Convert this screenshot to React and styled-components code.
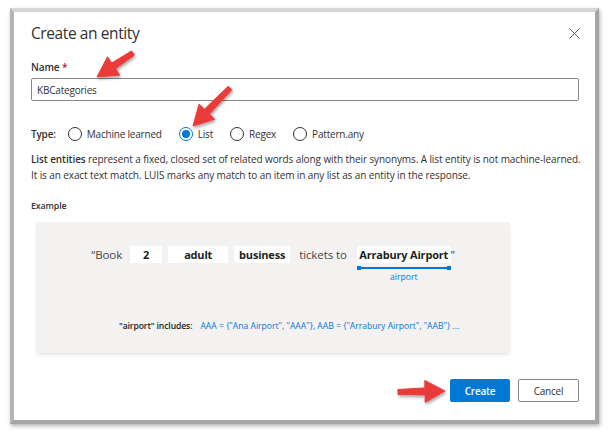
import React from "react";
import styled, { createGlobalStyle } from "styled-components";

const GlobalStyle = createGlobalStyle`
  html, body {
    margin: 0;
    padding: 0;
    background: #fff;
  }
  body {
    font-family: "Open Sans", "Noto Sans", sans-serif;
    color: #323130;
  }
`;

const arrows = [
  { from: [133, 53], to: [97, 77] },
  { from: [230, 88], to: [193, 126] },
  { from: [398, 392], to: [445, 391] },
];

function arrowPoints([x1, y1], [x2, y2]) {
  const dx = x2 - x1;
  const dy = y2 - y1;
  const len = Math.hypot(dx, dy);
  const ux = dx / len;
  const uy = dy / len;
  const nx = -uy;
  const ny = ux;
  const head = 20;
  const headW = 11;
  const tailW = 2.5;
  const neckW = 3.5;
  const bx = x2 - ux * head;
  const by = y2 - uy * head;
  const p = (x, y) => `${x.toFixed(1)},${y.toFixed(1)}`;
  return [
    p(x1 + nx * tailW, y1 + ny * tailW),
    p(bx + nx * neckW, by + ny * neckW),
    p(bx + nx * headW, by + ny * headW),
    p(x2, y2),
    p(bx - nx * headW, by - ny * headW),
    p(bx - nx * neckW, by - ny * neckW),
    p(x1 - nx * tailW, y1 - ny * tailW),
  ].join(" ");
}

function App() {
  return (
    <Page>
      <GlobalStyle />
      <Dialog>
        <Header>
          <Title>Create an entity</Title>
          <CloseBtn aria-label="Close">
            <svg width="11" height="11" viewBox="0 0 11 11">
              <path d="M0.5 0.5 L10.5 10.5 M10.5 0.5 L0.5 10.5" stroke="#605e5c" strokeWidth="1" />
            </svg>
          </CloseBtn>
        </Header>

        <Label>
          Name <Required>*</Required>
        </Label>
        <TextInput defaultValue="KBCategories" />

        <TypeRow>
          <TypeLabel>Type:</TypeLabel>
          <Radio label="Machine learned" />
          <Radio label="List" checked />
          <Radio label="Regex" />
          <Radio label="Pattern.any" />
        </TypeRow>

        <Description>
          <b>List entities</b> represent a fixed, closed set of related words along with their
          synonyms. A list entity is not machine-learned.
          <br />
          It is an exact text match. LUIS marks any match to an item in any list as an entity in
          the response.
        </Description>

        <SectionLabel>Example</SectionLabel>
        <ExampleCard>
          <Sentence>
            <Plain>“Book</Plain>
            <Token $w={32}>2</Token>
            <Token $w={60}>adult</Token>
            <Token $w={56}>business</Token>
            <Plain $pad>tickets to</Plain>
            <Tagged>
              <Token $w={94}>Arrabury Airport</Token>
              <TagLine />
              <TagName>airport</TagName>
            </Tagged>
            <Plain $tight>”</Plain>
          </Sentence>
          <Includes>
            <IncludesLabel>"airport" includes:</IncludesLabel>
            <IncludesValue>
              AAA = {"{"}"Ana Airport", "AAA"{"}"}, AAB = {"{"}"Arrabury Airport", "AAB"{"}"} ...
            </IncludesValue>
          </Includes>
        </ExampleCard>

        <Footer>
          <PrimaryButton>Create</PrimaryButton>
          <DefaultButton>Cancel</DefaultButton>
        </Footer>
      </Dialog>

      <Overlay width="611" height="431" viewBox="0 0 611 431">
        <defs>
          <filter id="arrowShadow" x="-20%" y="-20%" width="140%" height="140%">
            <feDropShadow dx="1" dy="2" stdDeviation="1.5" floodColor="#000" floodOpacity="0.35" />
          </filter>
        </defs>
        {arrows.map((a, i) => (
          <polygon
            key={i}
            points={arrowPoints(a.from, a.to)}
            fill="#ea3b3b"
            stroke="#ea3b3b"
            strokeWidth="1"
            strokeLinejoin="round"
            filter="url(#arrowShadow)"
          />
        ))}
      </Overlay>
    </Page>
  );
}

function Radio({ label, checked }) {
  return (
    <RadioOption>
      <RadioCircle $checked={checked} />
      <span>{label}</span>
    </RadioOption>
  );
}

export default App;

const Page = styled.div`
  position: relative;
  width: 611px;
  height: 431px;
  padding: 8px 0 0 10px;
  box-sizing: border-box;
  overflow: hidden;
`;

const Dialog = styled.div`
  width: 589px;
  height: 416px;
  box-sizing: border-box;
  border: 4px solid #a6a6a6;
  border-top-color: #d6d6d6;
  border-left-color: #b4b4b4;
  box-shadow: 1px 2px 4px rgba(0, 0, 0, 0.3);
  background: #fff;
  padding: 9px 16px 0 17px;
  display: flex;
  flex-direction: column;
`;

const Header = styled.div`
  display: flex;
  align-items: center;
  justify-content: space-between;
  height: 24px;
`;

const Title = styled.h1`
  margin: 0;
  font-size: 15.5px;
  font-weight: 400;
  letter-spacing: -0.4px;
  line-height: 24px;
  color: #323130;
`;

const CloseBtn = styled.button`
  border: 0;
  background: none;
  padding: 0;
  margin-right: -1px;
  display: flex;
`;

const Label = styled.div`
  margin-top: 14px;
  font-size: 10px;
  font-weight: 600;
  letter-spacing: -0.1px;
  line-height: 16px;
`;

const Required = styled.span`
  color: #a4262c;
`;

const TextInput = styled.input`
  margin-top: 3px;
  height: 23px;
  box-sizing: border-box;
  border: 1px solid #8a8886;
  border-radius: 2px;
  padding: 0 5px;
  font-family: inherit;
  font-size: 10px;
  letter-spacing: -0.2px;
  color: #323130;
  outline: none;
`;

const TypeRow = styled.div`
  margin-top: 23px;
  display: flex;
  align-items: center;
  height: 20px;
  font-size: 10px;
  letter-spacing: -0.2px;
`;

const TypeLabel = styled.span`
  font-weight: 600;
  margin-right: 12px;
`;

const RadioOption = styled.label`
  display: flex;
  align-items: center;
  gap: 5px;
  margin-right: 17px;
  color: #323130;
`;

const RadioCircle = styled.span`
  width: 14px;
  height: 14px;
  box-sizing: border-box;
  border-radius: 50%;
  border: 1px solid ${(p) => (p.$checked ? "#0078d4" : "#323130")};
  display: flex;
  align-items: center;
  justify-content: center;

  &::after {
    content: "";
    width: 8px;
    height: 8px;
    border-radius: 50%;
    background: #0078d4;
    display: ${(p) => (p.$checked ? "block" : "none")};
  }
`;

const Description = styled.p`
  margin: 7px 0 0;
  font-size: 10px;
  letter-spacing: -0.1px;
  line-height: 16px;
  white-space: nowrap;

  b {
    font-weight: 600;
  }
`;

const SectionLabel = styled.div`
  margin-top: 15px;
  font-size: 8.8px;
  font-weight: 600;
  letter-spacing: -0.1px;
  line-height: 16px;
`;

const ExampleCard = styled.div`
  margin: 8px 0 0 6px;
  width: 472px;
  height: 131px;
  box-sizing: border-box;
  background: #f3f2f1;
  box-shadow: 0 1.6px 3.6px rgba(0, 0, 0, 0.13), 0 0.3px 0.9px rgba(0, 0, 0, 0.11);
  padding-top: 24px;
  display: flex;
  flex-direction: column;
`;

const Sentence = styled.div`
  display: flex;
  justify-content: center;
  align-items: flex-start;
  gap: 6px;
  font-size: 11.5px;
  line-height: 17px;
`;

const Plain = styled.span`
  color: #484644;
  letter-spacing: -0.1px;
  margin: ${(p) => (p.$tight ? "0 0 0 -6px" : p.$pad ? "0 4px 0 3px" : "0 2px 0 0")};
`;

const Token = styled.span`
  display: block;
  width: ${(p) => p.$w}px;
  background: #fff;
  text-align: center;
  font-size: 11px;
  font-weight: 700;
  letter-spacing: -0.2px;
  color: #201f1e;
  white-space: nowrap;
`;

const Tagged = styled.div`
  display: flex;
  flex-direction: column;
  align-items: stretch;
`;

const TagLine = styled.div`
  position: relative;
  margin-top: 4px;
  height: 2px;
  background: #0078d4;

  &::before,
  &::after {
    content: "";
    position: absolute;
    top: -1px;
    width: 4px;
    height: 4px;
    background: #0078d4;
  }
  &::before {
    left: 0;
  }
  &::after {
    right: 0;
  }
`;

const TagName = styled.div`
  text-align: center;
  font-size: 8.6px;
  line-height: 12px;
  margin-top: 2px;
  color: #0078d4;
`;

const Includes = styled.div`
  margin-top: 36px;
  padding-left: 82px;
  display: flex;
  gap: 8px;
  font-size: 8.6px;
  line-height: 14px;
  white-space: nowrap;
`;

const IncludesLabel = styled.span`
  font-weight: 600;
  letter-spacing: -0.1px;
  color: #201f1e;
`;

const IncludesValue = styled.span`
  color: #0078d4;
`;

const Footer = styled.div`
  margin-top: 26px;
  display: flex;
  justify-content: flex-end;
  gap: 8px;
`;

const ButtonBase = styled.button`
  height: 23px;
  box-sizing: border-box;
  border-radius: 2px;
  font-family: inherit;
  font-size: 10px;
  letter-spacing: -0.2px;
  font-weight: 600;
  padding: 0;
`;

const PrimaryButton = styled(ButtonBase)`
  width: 60px;
  background: #0078d4;
  border: 1px solid #0078d4;
  color: #fff;
`;

const DefaultButton = styled(ButtonBase)`
  width: 61px;
  background: #fff;
  border: 1px solid #8a8886;
  color: #323130;
  font-weight: 400;
`;

const Overlay = styled.svg`
  position: absolute;
  left: 0;
  top: 0;
  pointer-events: none;
`;
